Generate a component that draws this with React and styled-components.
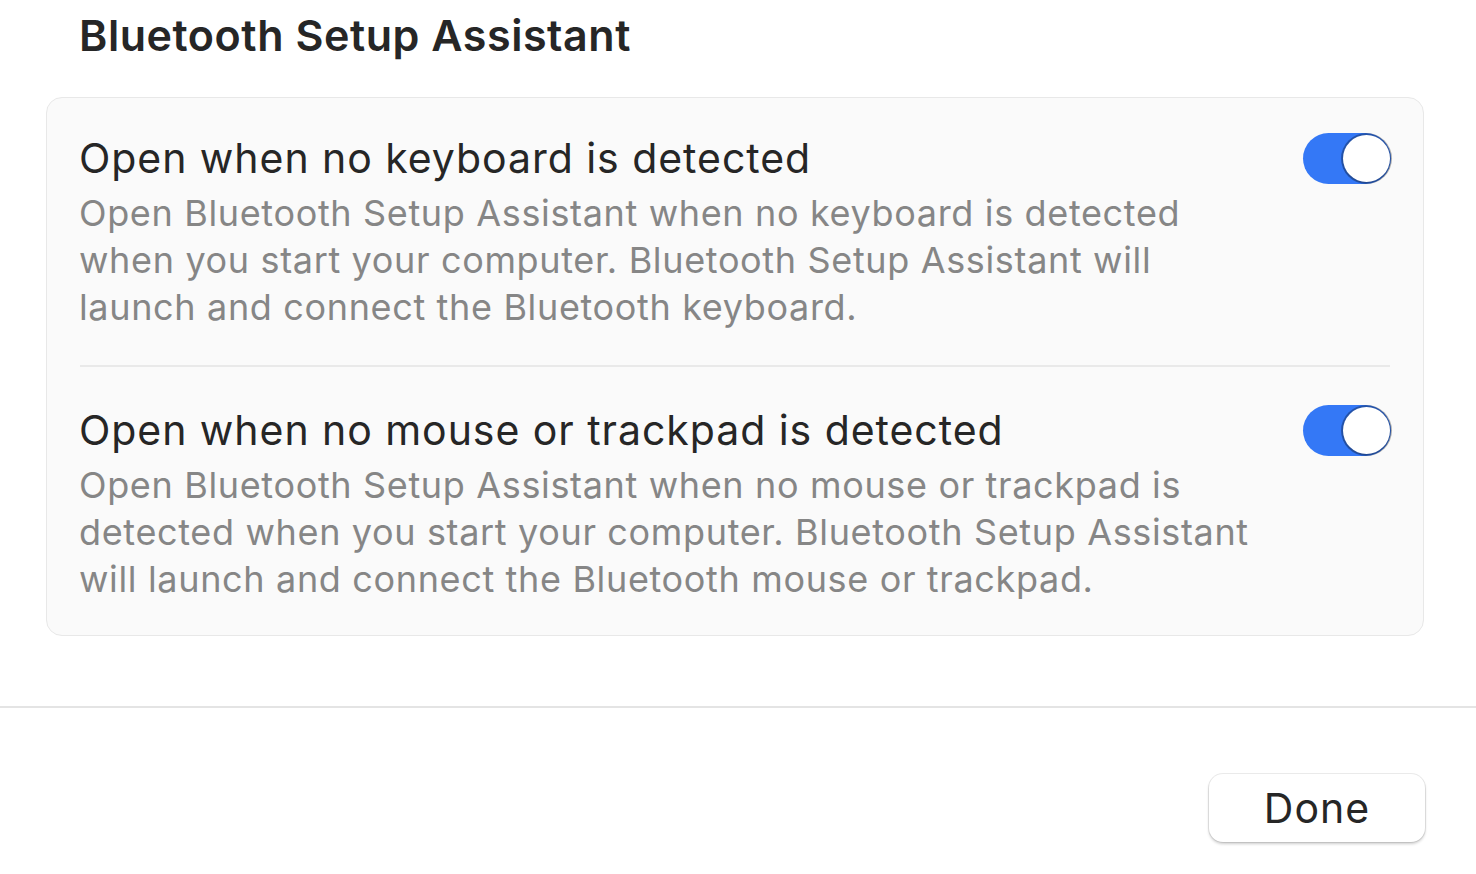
import React from 'react';
import styled, { createGlobalStyle } from 'styled-components';

const GlobalStyle = createGlobalStyle`
  html, body {
    margin: 0;
    padding: 0;
    background: #ffffff;
  }
  body {
    font-family: Inter, "Liberation Sans", Arial, sans-serif;
    -webkit-font-smoothing: antialiased;
  }
`;

const settings = [
  {
    id: 'keyboard',
    title: 'Open when no keyboard is detected',
    lines: [
      'Open Bluetooth Setup Assistant when no keyboard is detected',
      'when you start your computer. Bluetooth Setup Assistant will',
      'launch and connect the Bluetooth keyboard.',
    ],
  },
  {
    id: 'mouse',
    title: 'Open when no mouse or trackpad is detected',
    lines: [
      'Open Bluetooth Setup Assistant when no mouse or trackpad is',
      'detected when you start your computer. Bluetooth Setup Assistant',
      'will launch and connect the Bluetooth mouse or trackpad.',
    ],
  },
];

const Toggle = ({ on }) => (
  <Track $on={on}>
    <Knob />
  </Track>
);

const App = () => {
  return (
    <>
      <GlobalStyle />
      <Sheet>
        <Content>
          <Heading>Bluetooth Setup Assistant</Heading>
          <Card>
            {settings.map((s, i) => (
              <Row key={s.id} $first={i === 0}>
                <RowText>
                  <RowTitle>{s.title}</RowTitle>
                  <RowDesc>
                    {s.lines.map((l) => (
                      <span key={l}>{l}</span>
                    ))}
                  </RowDesc>
                </RowText>
                <Toggle on />
              </Row>
            ))}
          </Card>
        </Content>
        <Footer>
          <Button>Done</Button>
        </Footer>
      </Sheet>
    </>
  );
};

// Styled Components
const Sheet = styled.div`
  width: 1476px;
  height: 874px;
  display: flex;
  flex-direction: column;
  overflow: hidden;
  color: #262626;
`;

const Content = styled.div`
  padding: 10px 52px 0 46px;
`;

const Heading = styled.h1`
  margin: 0 0 37px 33px;
  font-size: 43px;
  line-height: 50px;
  font-weight: 600;
  letter-spacing: 0.55px;
  color: #262626;
`;

const Card = styled.div`
  background: #fafafa;
  border: 1px solid #e8e8e8;
  border-radius: 16px;
  padding: 0 33px 0 33px;
`;

const Row = styled.div`
  display: flex;
  align-items: flex-start;
  justify-content: space-between;
  padding: ${(p) => (p.$first ? '35px 0 34px' : '38px 0 32px')};
  border-top: ${(p) => (p.$first ? 'none' : '2px solid #e9e9e9')};
`;

const RowText = styled.div`
  display: flex;
  flex-direction: column;
`;

const RowTitle = styled.div`
  font-size: 41px;
  line-height: 50px;
  letter-spacing: 0.95px;
  margin-left: -1px;
  color: #262626;
`;

const RowDesc = styled.div`
  margin-top: 7px;
  display: flex;
  flex-direction: column;
  font-size: 36px;
  line-height: 47px;
  letter-spacing: 0.65px;
  margin-left: -1px;
  color: #868686;
`;

const Track = styled.div`
  width: 88px;
  height: 51px;
  margin-right: -1px;
  border-radius: 26px;
  background: ${(p) => (p.$on ? '#3478f6' : '#e2e2e2')};
  display: flex;
  align-items: center;
  justify-content: ${(p) => (p.$on ? 'flex-end' : 'flex-start')};
  padding: 0 1px;
  box-sizing: border-box;
  flex-shrink: 0;
`;

const Knob = styled.div`
  width: 47px;
  height: 47px;
  border-radius: 50%;
  background: #ffffff;
  box-shadow: 0 0 0 2px rgba(0, 0, 0, 0.3), 0 1px 2px rgba(0, 0, 0, 0.2);
`;

const Footer = styled.div`
  margin-top: 70px;
  border-top: 2px solid #e4e4e4;
  display: flex;
  justify-content: flex-end;
  padding: 66px 51px 0 0;
`;

const Button = styled.button`
  width: 216px;
  height: 68px;
  border-radius: 14px;
  border: none;
  background: #ffffff;
  box-shadow: 0 0 0 1px rgba(0, 0, 0, 0.08), 0 2px 3px rgba(0, 0, 0, 0.2);
  font-family: Inter, "Liberation Sans", Arial, sans-serif;
  font-size: 41px;
  letter-spacing: 1px;
  color: #262626;
  padding: 0;
`;

export default App;
